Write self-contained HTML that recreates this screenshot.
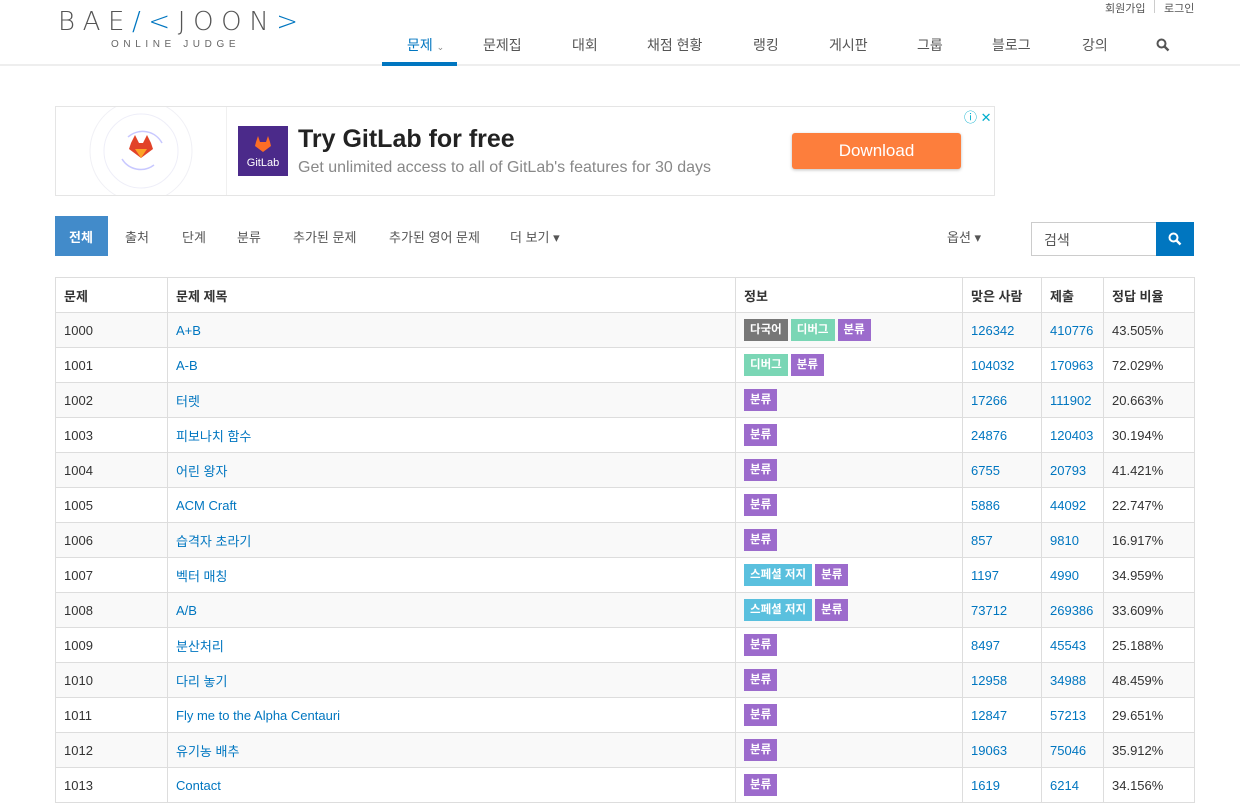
<!DOCTYPE html>
<html><head><meta charset="utf-8"><style>
*{box-sizing:border-box;margin:0;padding:0}
body{width:1240px;height:796px;overflow:hidden;background:#fff;font-family:"Liberation Sans","Noto Sans CJK KR",sans-serif;color:#333;font-size:13px;position:relative}
.abs{position:absolute}
a{color:#0076c0;text-decoration:none}
.hdr{position:absolute;left:0;top:0;width:1240px;height:66px;border-bottom:2px solid #eee}
.logo1{position:absolute;left:58px;top:7px;font-size:26px;letter-spacing:7.6px;color:#555;font-family:"DejaVu Sans","Liberation Sans",sans-serif;font-weight:200;white-space:nowrap}
.logo2{position:absolute;left:111px;top:39px;font-size:10px;letter-spacing:4.6px;color:#666}
.nav span{position:absolute;top:35px;font-size:14px;color:#555}
.top span{position:absolute;top:0px;font-size:11px;color:#555}
.ad{position:absolute;left:55px;top:106px;width:940px;height:90px;border:1px solid #e5e5e5}
.tabs span{position:absolute;top:227px;font-size:13px;color:#555}
table{position:absolute;left:55px;top:277px;border-collapse:collapse;table-layout:fixed;width:1139px}
td,th{border:1px solid #ddd;height:35px;padding:0 8px;text-align:left;font-size:13px;vertical-align:middle}
th{font-weight:bold;color:#333}
tr:nth-child(even) td{background:#f9f9f9}
.b{display:inline-block;color:#fff;font-weight:bold;font-size:11.5px;padding:0 6px;height:22px;line-height:22px;margin-right:3px;vertical-align:middle}
.g{background:#777}.m{background:#7ad6b5}.p{background:#9c6bcc}.c{background:#5ac0de}
</style></head><body>
<div class="hdr">
 <div class="logo1">BAE<span style="color:#0076c0">/&lt;</span>JOON<span style="color:#0076c0">&gt;</span></div>
 <div class="logo2">ONLINE JUDGE</div>
 <div class="top"><span style="left:1105px">회원가입</span><span style="left:1154px;top:0;width:1px;height:13px;background:#ccc"></span><span style="left:1164px">로그인</span></div>
 <div class="nav">
  <span style="left:407px;color:#0076c0">문제 <small style="font-size:9px;color:#888">&#8964;</small></span>
  <span style="left:483px">문제집</span><span style="left:572px">대회</span><span style="left:647px">채점 현황</span>
  <span style="left:753px">랭킹</span><span style="left:829px">게시판</span><span style="left:917px">그룹</span>
  <span style="left:992px">블로그</span><span style="left:1082px">강의</span>
  <svg style="position:absolute;left:1156px;top:38px" width="14" height="14" viewBox="0 0 14 14"><circle cx="5.5" cy="5.5" r="4" fill="none" stroke="#555" stroke-width="2"/><line x1="8.5" y1="8.5" x2="12.5" y2="12.5" stroke="#555" stroke-width="2.4"/></svg>
 </div>
 <div class="abs" style="left:382px;top:62px;width:75px;height:4px;background:#0076c0"></div>
</div>
<div class="ad">
 <div class="abs" style="left:170px;top:0;width:1px;height:88px;background:#f0f0f0"></div>
 <svg class="abs" style="left:30px;top:0" width="110" height="88" viewBox="0 0 110 88"><circle cx="55" cy="44" r="51" fill="none" stroke="#f0f0f5"/><circle cx="55" cy="44" r="37" fill="none" stroke="#eeeef8"/><path d="M42 30 A22 22 0 0 1 76 36" fill="none" stroke="#c8c8ff" stroke-width="1.5"/><path d="M68 58 A22 22 0 0 1 36 52" fill="none" stroke="#c8c8ff" stroke-width="1.5"/><path d="M45 36 L49 28 L53 36 L57 36 L61 28 L65 36 L67 42 L55 51 L43 42Z" fill="#e24329"/><path d="M49 42 L55 51 L61 42Z" fill="#fca326"/></svg>
 <div class="abs" style="left:182px;top:19px;width:50px;height:50px;background:#4b2a8a"><svg width="50" height="50" viewBox="0 0 50 50"><path d="M18 16 L20 10 L22 16 L28 16 L30 10 L32 16 L33 20 L25 26 L17 20Z" fill="#fc6d26"/></svg><div class="abs" style="left:0;top:31px;width:50px;text-align:center;color:#fff;font-size:11px">GitLab</div></div>
 <div class="abs" style="left:242px;top:18px;font-size:25px;font-weight:bold;color:#222">Try GitLab for free</div>
 <div class="abs" style="left:242px;top:52px;font-size:16px;color:#888">Get unlimited access to all of GitLab's features for 30 days</div>
 <div class="abs" style="left:736px;top:26px;width:169px;height:36px;background:#fd7e3c;border-radius:3px;box-shadow:0 1px 3px rgba(0,0,0,.25);color:#fff;font-size:17px;text-align:center;line-height:36px">Download</div>
 <div class="abs" style="left:908px;top:0;color:#00aecd;font-size:13px">ⓘ ✕</div>
</div>
<div class="tabs">
 <div class="abs" style="left:55px;top:216px;width:53px;height:40px;background:#428bca"></div>
 <span style="left:69px;color:#fff;font-weight:bold">전체</span><span style="left:125px">출처</span><span style="left:182px">단계</span><span style="left:237px">분류</span>
 <span style="left:293px">추가된 문제</span><span style="left:389px">추가된 영어 문제</span><span style="left:510px">더 보기 ▾</span>
 <span style="left:947px">옵션 ▾</span>
</div>
<div class="abs" style="left:1031px;top:222px;width:126px;height:34px;border:1px solid #ccc;padding:7px 12px;font-size:14px;color:#555">검색</div>
<div class="abs" style="left:1156px;top:222px;width:38px;height:34px;background:#0076c0"><svg style="position:absolute;left:12px;top:10px" width="14" height="14" viewBox="0 0 14 14"><circle cx="5.5" cy="5.5" r="4" fill="none" stroke="#fff" stroke-width="2"/><line x1="8.5" y1="8.5" x2="12.5" y2="12.5" stroke="#fff" stroke-width="2.4"/></svg></div>
<table>
<colgroup><col style="width:112px"><col style="width:568px"><col style="width:227px"><col style="width:79px"><col style="width:62px"><col style="width:91px"></colgroup>
<tr><th>문제</th><th>문제 제목</th><th>정보</th><th>맞은 사람</th><th>제출</th><th>정답 비율</th></tr>
<tr><td>1000</td><td><a>A+B</a></td><td><span class="b g">다국어</span><span class="b m">디버그</span><span class="b p">분류</span></td><td><a>126342</a></td><td><a>410776</a></td><td>43.505%</td></tr>
<tr><td>1001</td><td><a>A-B</a></td><td><span class="b m">디버그</span><span class="b p">분류</span></td><td><a>104032</a></td><td><a>170963</a></td><td>72.029%</td></tr>
<tr><td>1002</td><td><a>터렛</a></td><td><span class="b p">분류</span></td><td><a>17266</a></td><td><a>111902</a></td><td>20.663%</td></tr>
<tr><td>1003</td><td><a>피보나치 함수</a></td><td><span class="b p">분류</span></td><td><a>24876</a></td><td><a>120403</a></td><td>30.194%</td></tr>
<tr><td>1004</td><td><a>어린 왕자</a></td><td><span class="b p">분류</span></td><td><a>6755</a></td><td><a>20793</a></td><td>41.421%</td></tr>
<tr><td>1005</td><td><a>ACM Craft</a></td><td><span class="b p">분류</span></td><td><a>5886</a></td><td><a>44092</a></td><td>22.747%</td></tr>
<tr><td>1006</td><td><a>습격자 초라기</a></td><td><span class="b p">분류</span></td><td><a>857</a></td><td><a>9810</a></td><td>16.917%</td></tr>
<tr><td>1007</td><td><a>벡터 매칭</a></td><td><span class="b c">스페셜 저지</span><span class="b p">분류</span></td><td><a>1197</a></td><td><a>4990</a></td><td>34.959%</td></tr>
<tr><td>1008</td><td><a>A/B</a></td><td><span class="b c">스페셜 저지</span><span class="b p">분류</span></td><td><a>73712</a></td><td><a>269386</a></td><td>33.609%</td></tr>
<tr><td>1009</td><td><a>분산처리</a></td><td><span class="b p">분류</span></td><td><a>8497</a></td><td><a>45543</a></td><td>25.188%</td></tr>
<tr><td>1010</td><td><a>다리 놓기</a></td><td><span class="b p">분류</span></td><td><a>12958</a></td><td><a>34988</a></td><td>48.459%</td></tr>
<tr><td>1011</td><td><a>Fly me to the Alpha Centauri</a></td><td><span class="b p">분류</span></td><td><a>12847</a></td><td><a>57213</a></td><td>29.651%</td></tr>
<tr><td>1012</td><td><a>유기농 배추</a></td><td><span class="b p">분류</span></td><td><a>19063</a></td><td><a>75046</a></td><td>35.912%</td></tr>
<tr><td>1013</td><td><a>Contact</a></td><td><span class="b p">분류</span></td><td><a>1619</a></td><td><a>6214</a></td><td>34.156%</td></tr>
</table>
</body></html>
